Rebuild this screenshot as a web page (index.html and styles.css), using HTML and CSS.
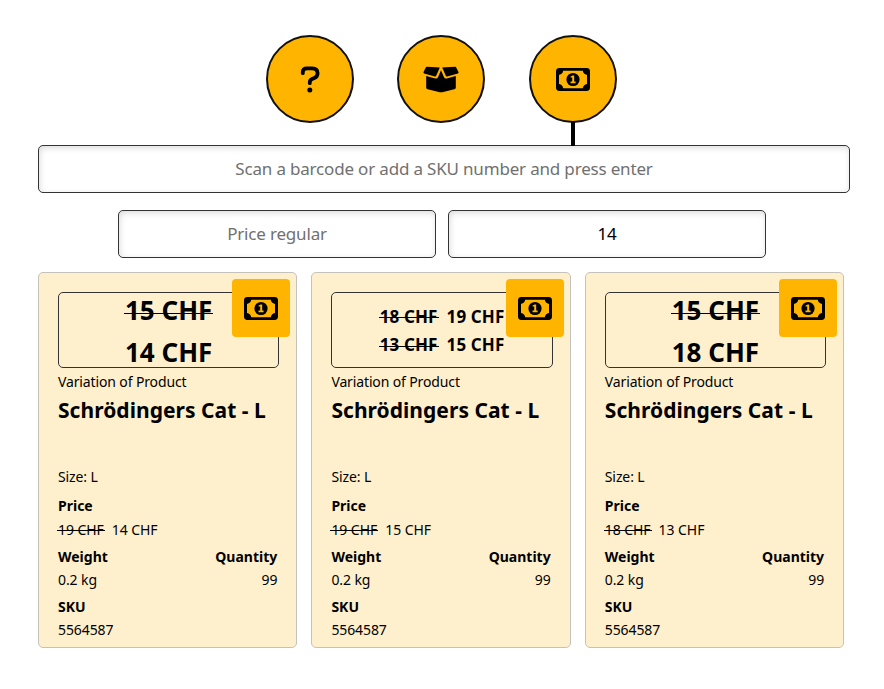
FILE: index.html
```html
<!DOCTYPE html>
<html lang="en">
<head>
<meta charset="utf-8">
<title>Products</title>
<link rel="stylesheet" href="styles.css">
</head>
<body>
<svg width="0" height="0" class="defs">
  <symbol id="bill" viewBox="0 0 34 23">
    <rect width="34" height="23" rx="3.4"/>
    <path class="cut" d="M7.2 2.8H26.8Q27.2 6 31 6.9V16.1Q27.2 17 26.8 20.2H7.2Q6.8 17 3 16.1V6.9Q6.8 6 7.2 2.8Z"/>
    <circle cx="17" cy="11.5" r="6.6"/>
    <path class="cut" d="M14.6 8.5L16.7 7.4H18.2V13.6H19.6V15.2H14.5V13.6H16.2V9.5H14.6Z"/>
  </symbol>
</svg>
<main class="page">
  <nav class="modes">
    <button class="mode" aria-label="Help"><svg width="20" height="27" viewBox="0 0 20 27"><path class="hook" d="M2.8 7.2V6.1Q2.8 2.3 7 2.3H12.1Q17.6 2.3 17.6 7.2Q17.6 10.7 14.4 12L12 13Q9.8 14 9.8 16.3V17.2"/><circle cx="9.8" cy="24" r="2.5"/></svg></button>
    <button class="mode" aria-label="Stock"><svg width="36" height="27" viewBox="0 0 36 27"><path d="M4 .8L16.8 1.4L13.2 9.8Q12.8 10.7 11.8 10.4L1.1 7.5Q.1 7.1.5 6.1L2.8 1.5Q3.2.7 4 .8ZM32 .8L19.2 1.4L22.8 9.8Q23.2 10.7 24.2 10.4L34.9 7.5Q35.9 7.1 35.5 6.1L33.2 1.5Q32.8.7 32 .8Z"/><path d="M3.2 10.1L12.3 12.4Q14.2 12.8 15 11.2L18 4.3L21 11.2Q21.8 12.8 23.7 12.4L32.8 10.1V21.4Q32.8 22.9 31.3 23.3L19.2 26.2Q18 26.5 16.8 26.2L4.7 23.3Q3.2 22.9 3.2 21.4Z"/></svg></button>
    <button class="mode active" aria-label="Price"><svg width="34" height="23"><use href="#bill"/></svg></button>
  </nav>
  <input class="field scan" placeholder="Scan a barcode or add a SKU number and press enter">
  <div class="prices">
    <input class="field" placeholder="Price regular">
    <input class="field" value="14">
  </div>
  <section class="cards">
    <article class="card">
      <div class="label big"><div><span class="old">15 CHF</span></div><div>14 CHF</div></div>
      <div class="badge"><svg width="34" height="23"><use href="#bill"/></svg></div>
      <p class="kind">Variation of Product</p>
      <h2>Schrödingers Cat - L</h2>
      <p class="size">Size: L</p>
      <h3>Price</h3>
      <p class="cost"><span class="old">19 CHF</span><span>14 CHF</span></p>
      <div class="row"><h3>Weight</h3><h3>Quantity</h3></div>
      <div class="row value"><p>0.2 kg</p><p>99</p></div>
      <h3>SKU</h3>
      <p class="value">5564587</p>
    </article>
    <article class="card">
      <div class="label small"><div><span class="old">18 CHF</span><span>19 CHF</span></div><div><span class="old">13 CHF</span><span>15 CHF</span></div></div>
      <div class="badge"><svg width="34" height="23"><use href="#bill"/></svg></div>
      <p class="kind">Variation of Product</p>
      <h2>Schrödingers Cat - L</h2>
      <p class="size">Size: L</p>
      <h3>Price</h3>
      <p class="cost"><span class="old">19 CHF</span><span>15 CHF</span></p>
      <div class="row"><h3>Weight</h3><h3>Quantity</h3></div>
      <div class="row value"><p>0.2 kg</p><p>99</p></div>
      <h3>SKU</h3>
      <p class="value">5564587</p>
    </article>
    <article class="card">
      <div class="label big"><div><span class="old">15 CHF</span></div><div>18 CHF</div></div>
      <div class="badge"><svg width="34" height="23"><use href="#bill"/></svg></div>
      <p class="kind">Variation of Product</p>
      <h2>Schrödingers Cat - L</h2>
      <p class="size">Size: L</p>
      <h3>Price</h3>
      <p class="cost"><span class="old">18 CHF</span><span>13 CHF</span></p>
      <div class="row"><h3>Weight</h3><h3>Quantity</h3></div>
      <div class="row value"><p>0.2 kg</p><p>99</p></div>
      <h3>SKU</h3>
      <p class="value">5564587</p>
    </article>
  </section>
</main>
</body>
</html>
```
FILE: styles.css
```css
* { box-sizing: border-box; }
body { margin: 0; background: #fff; color: #000; font: 14px/20px "Noto Sans", "Open Sans", sans-serif; }
p, h2, h3 { margin: 0; }
svg { display: block; }
.defs { position: absolute; }
.cut { fill: #ffb400; }
.page { padding: 35px 34px 0 38px; }
.modes { display: flex; gap: 43.7px; margin-left: 227.5px; height: 110px; }
.mode { position: relative; display: flex; align-items: center; justify-content: center; width: 88px; height: 88px; padding: 0; border: 2px solid #111; border-radius: 50%; background: #ffb400; color: #000; }
.mode.active::after { content: ""; position: absolute; top: 85px; left: 40px; width: 4px; height: 24px; background: #000; }
.hook { fill: none; stroke: #000; stroke-width: 3.8; stroke-linecap: round; stroke-linejoin: round; }
.field { display: block; min-width: 0; height: 48px; padding: 0 10px 2px; border: 1.5px solid #333; border-radius: 5px; background: #fff; box-shadow: inset 1px 2px 6px rgba(0, 0, 0, .14); color: #000; font: 17px "Noto Sans", sans-serif; letter-spacing: -.18px; text-align: center; outline: none; }
.field::placeholder { color: #707070; opacity: 1; }
.scan { width: 812px; }
.prices { display: grid; grid-template-columns: 318px 318px; gap: 12px; margin: 17px 0 14px 80px; }
.cards { display: grid; grid-template-columns: repeat(3, 259.3px); gap: 14.1px; }
.card { position: relative; height: 376px; padding: 19px 17px 0 19px; border: 1px solid #c5c1bb; border-radius: 5px; background: #fff0cd; }
.label { display: flex; flex-direction: column; align-items: center; justify-content: center; height: 76px; padding-top: 2px; border: 1.5px solid #333; border-radius: 5px; font-weight: 700; }
.big { font-size: 26px; line-height: 42px; }
.big div { height: 42px; flex: none; }
.small { font-size: 17px; line-height: 28px; letter-spacing: .12px; }
.small .old { margin-right: 9px; }
.cost { letter-spacing: -.06px; }
.cost .old { margin-right: 8px; }
.small div { flex: none; height: 28px; margin: 0 0 .5px; }
.old { position: relative; display: inline-block; }
.old::after { content: ""; position: absolute; left: -1px; right: -1px; top: 52%; height: 1px; background: #000; }
.big .old::after { top: 24px; }
.badge { position: absolute; top: 6px; right: 6px; display: flex; align-items: center; justify-content: center; width: 58px; height: 58px; border-radius: 4px; background: #ffb400; }
.kind { margin-top: 4px; letter-spacing: -.13px; }
h2 { margin-top: 2px; font-size: 21px; line-height: 32px; letter-spacing: .04px; white-space: nowrap; }
.size { margin-top: 41px; letter-spacing: -.1px; }
h3 { margin-top: 7px; font-size: 14px; line-height: 20px; }
.size + h3 { margin-top: 9px; }
.cost { margin-top: 4px; }
.row { display: flex; justify-content: space-between; padding-right: 2px; }
.value { margin-top: 3px; letter-spacing: -.1px; }
```
